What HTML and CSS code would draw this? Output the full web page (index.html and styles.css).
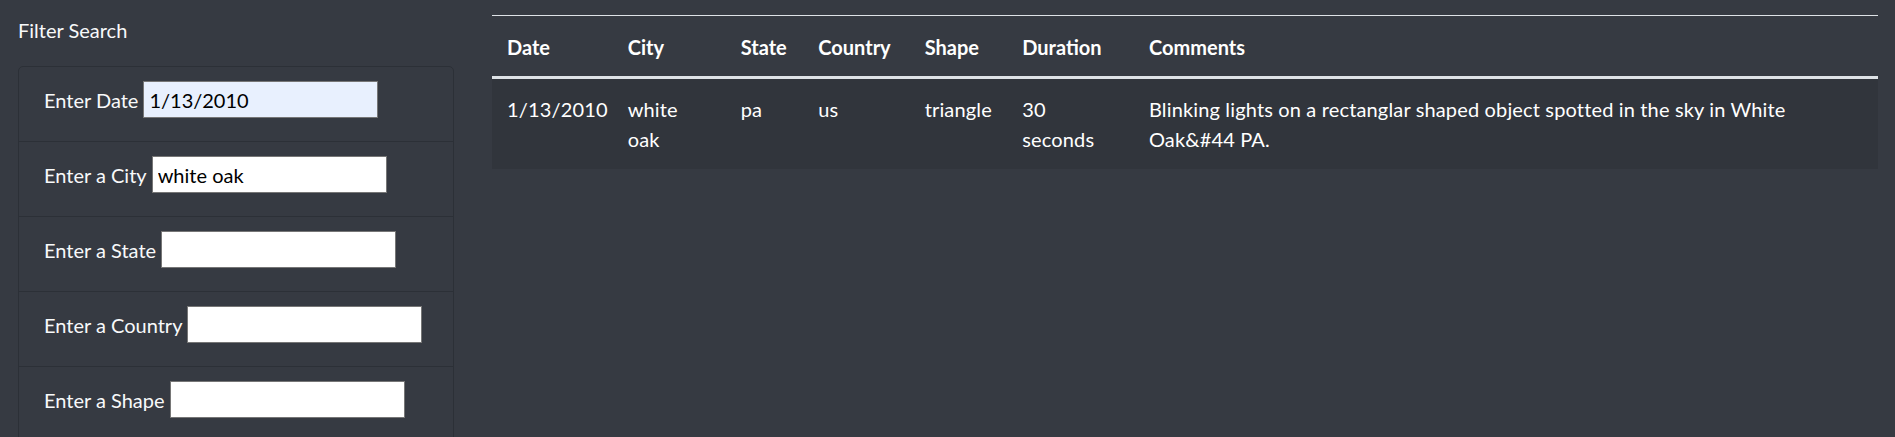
FILE: index.html
```html
<!DOCTYPE html>
<html lang="en">
<head>
<meta charset="utf-8">
<title>UFO Sightings</title>
<link rel="stylesheet" href="styles.css">
</head>
<body>
<div class="page">
  <aside class="filters">
    <p class="filter-title">Filter Search</p>
    <ul class="filter-list">
      <li class="filter-item"><label for="datetime">Enter Date</label><input id="datetime" class="filter-input autofilled" type="text" value="1/13/2010"></li>
      <li class="filter-item"><label for="city">Enter a City</label><input id="city" class="filter-input" type="text" value="white oak"></li>
      <li class="filter-item"><label for="state">Enter a State</label><input id="state" class="filter-input" type="text" value=""></li>
      <li class="filter-item"><label for="country">Enter a Country</label><input id="country" class="filter-input" type="text" value=""></li>
      <li class="filter-item"><label for="shape">Enter a Shape</label><input id="shape" class="filter-input" type="text" value=""></li>
    </ul>
  </aside>
  <main class="results">
    <table class="ufo-table">
      <colgroup>
        <col class="col-date"><col class="col-city"><col class="col-state"><col class="col-country"><col class="col-shape"><col class="col-duration"><col class="col-comments">
      </colgroup>
      <thead>
        <tr><th>Date</th><th>City</th><th>State</th><th>Country</th><th>Shape</th><th>Duration</th><th>Comments</th></tr>
      </thead>
      <tbody>
        <tr class="row-striped"><td>1/13/2010</td><td>white oak</td><td>pa</td><td>us</td><td>triangle</td><td>30 seconds</td><td class="cell-comments">Blinking lights on a rectanglar shaped object spotted in the sky in White Oak&amp;#44 PA.</td></tr>
      </tbody>
    </table>
  </main>
</div>
</body>
</html>
```
FILE: styles.css
```css
html, body {
  margin: 0;
  padding: 0;
  background: #363a42;
}
body {
  font-family: Lato, "Noto Sans", sans-serif;
  font-size: 20px;
  line-height: 30px;
  color: #f8f9fa;
}
.page {
  display: grid;
  grid-template-columns: 436px 1386px;
  column-gap: 38px;
  padding: 15px 0 0 18px;
}
.filter-title {
  margin: 0 0 21px 0;
  line-height: 30px;
}
.filter-list {
  list-style: none;
  margin: 0;
  padding: 0;
  border: 1px solid #2c3037;
  border-radius: 5px;
}
.filter-item {
  display: flex;
  align-items: center;
  gap: 5px;
  height: 37px;
  padding: 14px 25px 23px;
  border-bottom: 1px solid #2c3037;
}
.filter-item:last-child {
  border-bottom: none;
}
.filter-item label {
  white-space: nowrap;
}
.filter-input {
  box-sizing: border-box;
  width: 235px;
  height: 37px;
  margin: 0;
  padding: 0 5px;
  border: 1px solid #767676;
  border-radius: 0;
  background: #ffffff;
  color: #000000;
  font-family: inherit;
  font-size: 20px;
  outline: none;
}
.filter-input.autofilled {
  background: #e8f0fe;
}
.ufo-table {
  width: 1386px;
  table-layout: fixed;
  border-collapse: collapse;
  color: #ffffff;
}
.col-date { width: 120.7px; }
.col-city { width: 113px; }
.col-state { width: 77.6px; }
.col-country { width: 106.4px; }
.col-shape { width: 97.6px; }
.col-duration { width: 126.7px; }
.col-comments { width: auto; }
.ufo-table th,
.ufo-table td {
  padding: 15px 20px 15px 15px;
  text-align: left;
  vertical-align: top;
  line-height: 30px;
  overflow: visible;
}
.ufo-table th {
  font-weight: 700;
  padding-top: 16px;
  padding-bottom: 14px;
  border-top: 1px solid #dee2e6;
  border-bottom: 3px solid #dee2e6;
}
.ufo-table td {
  font-weight: 400;
  letter-spacing: 0.15px;
}
.ufo-table td.cell-comments {
  padding-right: 60px;
}
.row-striped {
  background: #31353c;
}
```
